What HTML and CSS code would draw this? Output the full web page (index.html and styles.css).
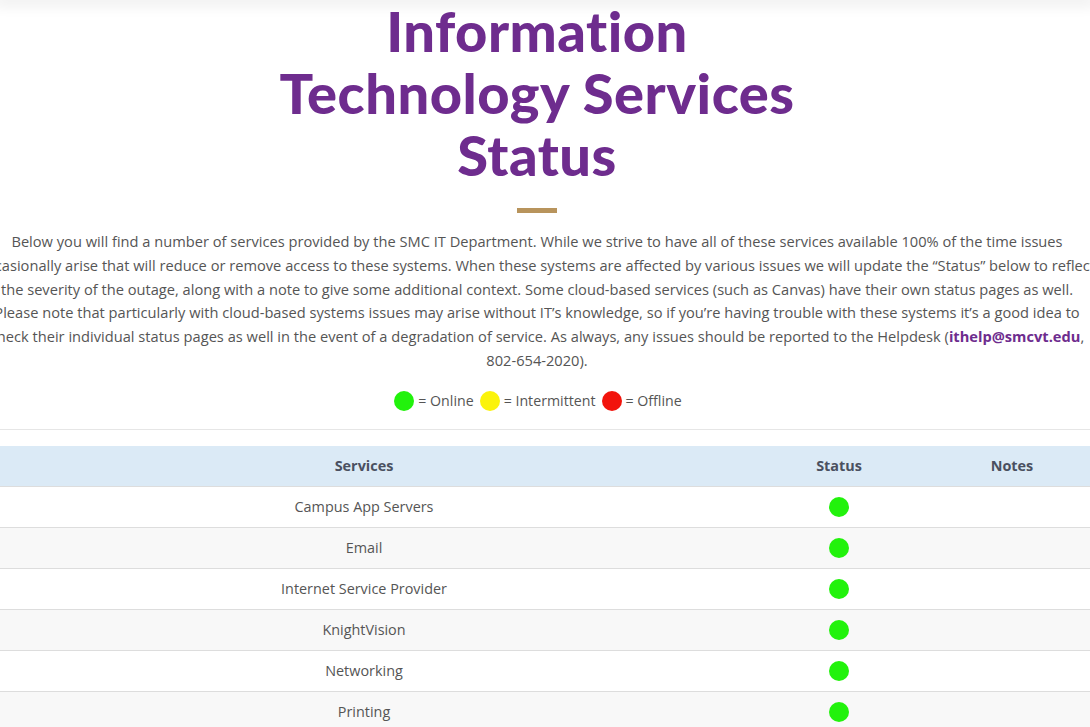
FILE: index.html
```html
<!DOCTYPE html>
<html lang="en">
<head>
  <meta charset="UTF-8" />
  <meta name="viewport" content="width=device-width, initial-scale=1" />
  <title>Information Technology Services Status</title>
  <link rel="stylesheet" href="styles.css">
</head>
<body>
  <div class="top-shadow"></div>

  <main class="content">
    <!-- TITULO -->
    <h1 class="page-title">Information<br>Technology Services<br>Status</h1>
    <div class="title-bar"></div>

    <p class="intro">
      Below you will find a number of services provided by the SMC IT Department. While we strive to have all of these services available 100% of the time issues<br>
      occasionally arise that will reduce or remove access to these systems. When these systems are affected by various issues we will update the “Status” below to reflect<br>
      the severity of the outage, along with a note to give some additional context. Some cloud-based services (such as Canvas) have their own status pages as well.<br>
      Please note that particularly with cloud-based systems issues may arise without IT’s knowledge, so if you’re having trouble with these systems it’s a good idea to<br>
      check their individual status pages as well in the event of a degradation of service. As always, any issues should be reported to the Helpdesk (<a href="mailto:ithelp@smcvt.edu">ithelp@smcvt.edu</a>,<br>
      802-654-2020).
    </p>

    <!-- LEGENDA -->
    <p class="legend">
      <span class="dot green"></span> = Online
      <span class="dot yellow"></span> = Intermittent
      <span class="dot red"></span> = Offline
    </p>

    <hr class="divider">

    <!-- TABELA -->
    <table class="status-table">
      <thead>
        <tr>
          <th class="col-service">Services</th>
          <th class="col-status">Status</th>
          <th class="col-notes">Notes</th>
        </tr>
      </thead>
      <tbody>
        <tr><td>Campus App Servers</td><td><span class="dot green"></span></td><td></td></tr>
        <tr><td>Email</td><td><span class="dot green"></span></td><td></td></tr>
        <tr><td>Internet Service Provider</td><td><span class="dot green"></span></td><td></td></tr>
        <tr><td>KnightVision</td><td><span class="dot green"></span></td><td></td></tr>
        <tr><td>Networking</td><td><span class="dot green"></span></td><td></td></tr>
        <tr><td>Printing</td><td><span class="dot green"></span></td><td></td></tr>
        <tr><td>Phones</td><td><span class="dot green"></span></td><td></td></tr>
      </tbody>
    </table>
  </main>
</body>
</html>
```

FILE: styles.css
```css
:root {
  --roxo: #6e2c8e;
  --dourado: #b8945c;
  --texto: #555555;
  --borda: #dddddd;
}

html, body {
  overflow: hidden;
}

body {
  margin: 0;
  background: #ffffff;
  color: var(--texto);
  font-family: 'Open Sans', 'Liberation Sans', sans-serif;
}

.top-shadow {
  height: 0;
  box-shadow: 0 0 14px 6px rgba(0, 0, 0, 0.07);
}

.content {
  width: 1140px;
  margin-left: -33px;
  text-align: center;
}

.page-title {
  margin: 0;
  color: var(--roxo);
  font-family: Lato, 'Liberation Sans', sans-serif;
  font-size: 56px;
  font-weight: 900;
  line-height: 62px;
  letter-spacing: 0.5px;
}

.title-bar {
  width: 40px;
  height: 5px;
  background: var(--dourado);
  margin: 22px auto 0;
}

.intro {
  margin: 17px auto 0;
  width: 1140px;
  font-size: 14.65px;
  line-height: 23.8px;
  white-space: nowrap;
}

.intro a {
  color: var(--roxo);
  font-weight: bold;
  text-decoration: none;
}

.legend {
  margin: 16px 0 0;
  font-size: 14.2px;
  line-height: 24px;
  display: flex;
  justify-content: center;
  align-items: center;
  gap: 4px;
}

.legend .dot {
  margin-left: 2px;
}

.dot {
  display: inline-block;
  width: 20px;
  height: 20px;
  border-radius: 50%;
  vertical-align: middle;
}

.dot.green { background: #22f20c; }
.dot.yellow { background: #fbf30b; }
.dot.red { background: #f2140c; }

.divider {
  border: none;
  border-top: 1px solid #e6e6e6;
  margin: 16px 0 16px;
}

.status-table {
  width: 100%;
  border-collapse: collapse;
  font-size: 14.4px;
}

.status-table th {
  background: #dbeaf6;
  color: #4a5060;
  font-weight: bold;
  height: 40px;
  padding: 0;
  border-bottom: 1px solid var(--borda);
}

.col-service { width: 794px; }
.col-status { width: 156px; }

.status-table td {
  height: 40px;
  padding: 0;
  border-bottom: 1px solid var(--borda);
}

.status-table tbody tr:nth-child(even) {
  background: #f8f8f8;
}
```
